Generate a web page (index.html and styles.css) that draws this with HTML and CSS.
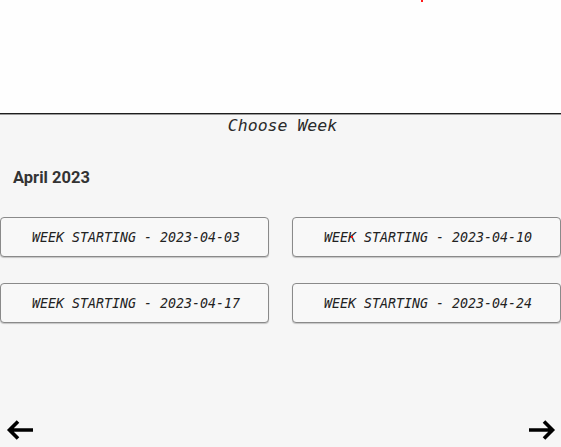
FILE: index.html
```html
<!DOCTYPE html>
<html>
<head>
<meta charset="utf-8">
<link rel="stylesheet" href="styles.css">
</head>
<body>
<div class="top"><span class="dot dot-top"></span></div>
<div class="panel">
  <div class="title">Choose Week</div>
  <div class="month">April 2023</div>
  <div class="weeks">
    <button class="week">WEEK STARTING - 2023-04-03</button>
    <button class="week">WEEK STARTING - 2023-04-10<span class="dot dot-btn"></span></button>
    <button class="week">WEEK STARTING - 2023-04-17</button>
    <button class="week">WEEK STARTING - 2023-04-24</button>
  </div>
  <div class="spacer"></div>
  <div class="nav">
    <svg class="arrow" width="30" height="22" viewBox="0 0 30 22"><path d="M28 11H5M13 2.5L4.5 11L13 19.5" fill="none" stroke="#000" stroke-width="3.6"/></svg>
    <svg class="arrow" width="30" height="22" viewBox="0 0 30 22"><path d="M2 11H25M17 2.5L25.5 11L17 19.5" fill="none" stroke="#000" stroke-width="3.6"/></svg>
  </div>
</div>
</body>
</html>
```
FILE: styles.css
```css
html, body {
  margin: 0;
  padding: 0;
  background: #ffffff;
  width: 561px;
  height: 447px;
  overflow: hidden;
}
.top {
  position: relative;
  height: 113px;
  background: #fefefe;
  border-bottom: 1px solid #1e1e1e;
  box-shadow: 0 1px 0 #9a9a9a;
}
.dot {
  position: absolute;
  width: 2px;
  height: 2px;
  background: #ff1a1a;
}
.dot-top {
  left: 421px;
  top: 0;
}
.panel {
  height: 332px;
  margin-top: 1px;
  background: #f6f6f6;
  display: flex;
  flex-direction: column;
}
.title {
  font-family: "DejaVu Sans Mono", monospace;
  font-style: italic;
  font-size: 16.5px;
  line-height: 22px;
  color: #2a2a2a;
  text-align: center;
  padding-left: 4px;
}
.month {
  font-family: Roboto, "Liberation Sans", sans-serif;
  font-weight: bold;
  font-size: 16.5px;
  line-height: 20px;
  color: #333;
  margin-top: 31px;
  padding-left: 13px;
}
.weeks {
  margin-top: 29px;
  display: grid;
  grid-template-columns: 269px 269px;
  column-gap: 23px;
  row-gap: 26px;
}
.week {
  position: relative;
  height: 40px;
  margin: 0;
  padding: 0 0 0 3px;
  background: #f8f8f8;
  border: 1px solid #8a8a8a;
  border-radius: 4px;
  box-shadow: 0 1px 1px rgba(0,0,0,0.2);
  font-family: "DejaVu Sans Mono", monospace;
  font-style: italic;
  font-size: 13.3px;
  color: #222;
  text-align: center;
}
.dot-btn {
  left: 58px;
  top: 18px;
}
.spacer {
  flex: 1;
}
.nav {
  display: flex;
  justify-content: space-between;
  padding: 0 4px 6px 5px;
}
.arrow {
  display: block;
}
```
